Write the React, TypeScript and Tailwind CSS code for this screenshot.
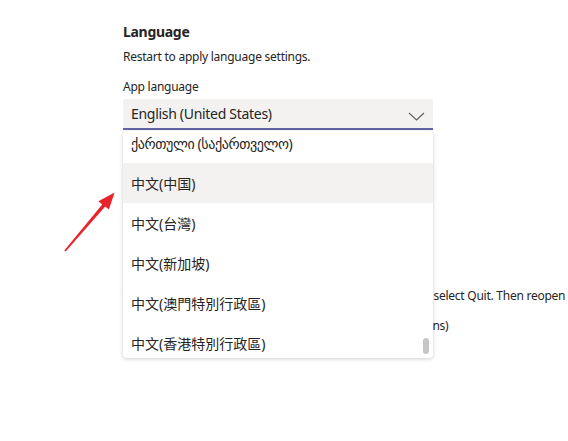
import React from "react";

const FONT = '"Segoe UI", "Noto Sans", "DejaVu Sans", "Noto Sans CJK SC", sans-serif';

const options = [
  { label: "ქართული (საქართველო)", latin: true },
  { label: "中文(中国)", latin: false },
  { label: "中文(台灣)", latin: false },
  { label: "中文(新加坡)", latin: false },
  { label: "中文(澳門特別行政區)", latin: false },
  { label: "中文(香港特別行政區)", latin: false },
  { label: "中文(繁體)", latin: false },
];

function Chevron() {
  return (
    <svg width="17" height="9" viewBox="0 0 17 9" className="absolute left-[285px] top-[13px]">
      <path d="M1 1 L8.5 8 L16 1" fill="none" stroke="#605e5c" strokeWidth="1.1" />
    </svg>
  );
}

function Arrow() {
  return (
    <svg width="568" height="441" className="absolute left-0 top-0 pointer-events-none">
      <polygon
        points="64.3,250.6 102.2,204.6 98.4,201.3 114.6,192.4 108.9,209.6 105.2,206.6 65.7,251.4"
        fill="#e8232b"
      />
    </svg>
  );
}

export default function App() {
  return (
    <div
      className="relative w-[568px] h-[441px] overflow-hidden bg-white text-[#252423]"
      style={{ fontFamily: FONT }}
    >
      <div className="flex flex-col pl-[123px] pt-[22px]">
        <h2 className="text-[14px] font-bold leading-[20px] tracking-[-0.3px]">Language</h2>
        <p className="mt-[5px] text-[12px] leading-[20px] tracking-[-0.25px]">Restart to apply language settings.</p>
        <label className="mt-[10px] text-[12px] leading-[20px] tracking-[-0.25px]">App language</label>

        <div className="relative mt-[2px] w-[310px] h-[31px] rounded-t-[3px] bg-[#f3f2f1] border-b-2 border-[#6264a7]">
          <div className="pl-[8px] pt-[5px] text-[14px] leading-[20px] tracking-[-0.3px]">English (United States)</div>
          <Chevron />

          <div className="absolute left-0 top-[32px] z-10 w-[310px] h-[227px] overflow-hidden rounded-[3px] bg-white shadow-[0_1px_4px_rgba(0,0,0,0.18),0_0_1px_rgba(0,0,0,0.12)]">
            <ul className="-mt-[8px] flex flex-col">
              {options.map((o, i) => (
                <li
                  key={o.label}
                  className={`flex h-[40px] items-center pl-[8px] text-[14px] ${o.latin ? "tracking-[-0.4px]" : ""} ${i === 1 ? "bg-[#f3f2f1]" : ""}`}
                >
                  {o.label}
                </li>
              ))}
            </ul>
            <div className="absolute left-[300px] top-[207px] h-[16px] w-[6px] rounded-[3px] bg-[#c8c6c4]" />
          </div>
        </div>

        <div className="mt-[156px] flex flex-col gap-[10px] text-[12px] leading-[20px] tracking-[-0.25px] whitespace-nowrap">
          <div>To finish right-click the Teams icon on the system taskbar, select Quit. Then reopen Teams.</div>
          <div>Keyboard language changes system dates and time options)</div>
        </div>
      </div>
      <Arrow />
    </div>
  );
}
